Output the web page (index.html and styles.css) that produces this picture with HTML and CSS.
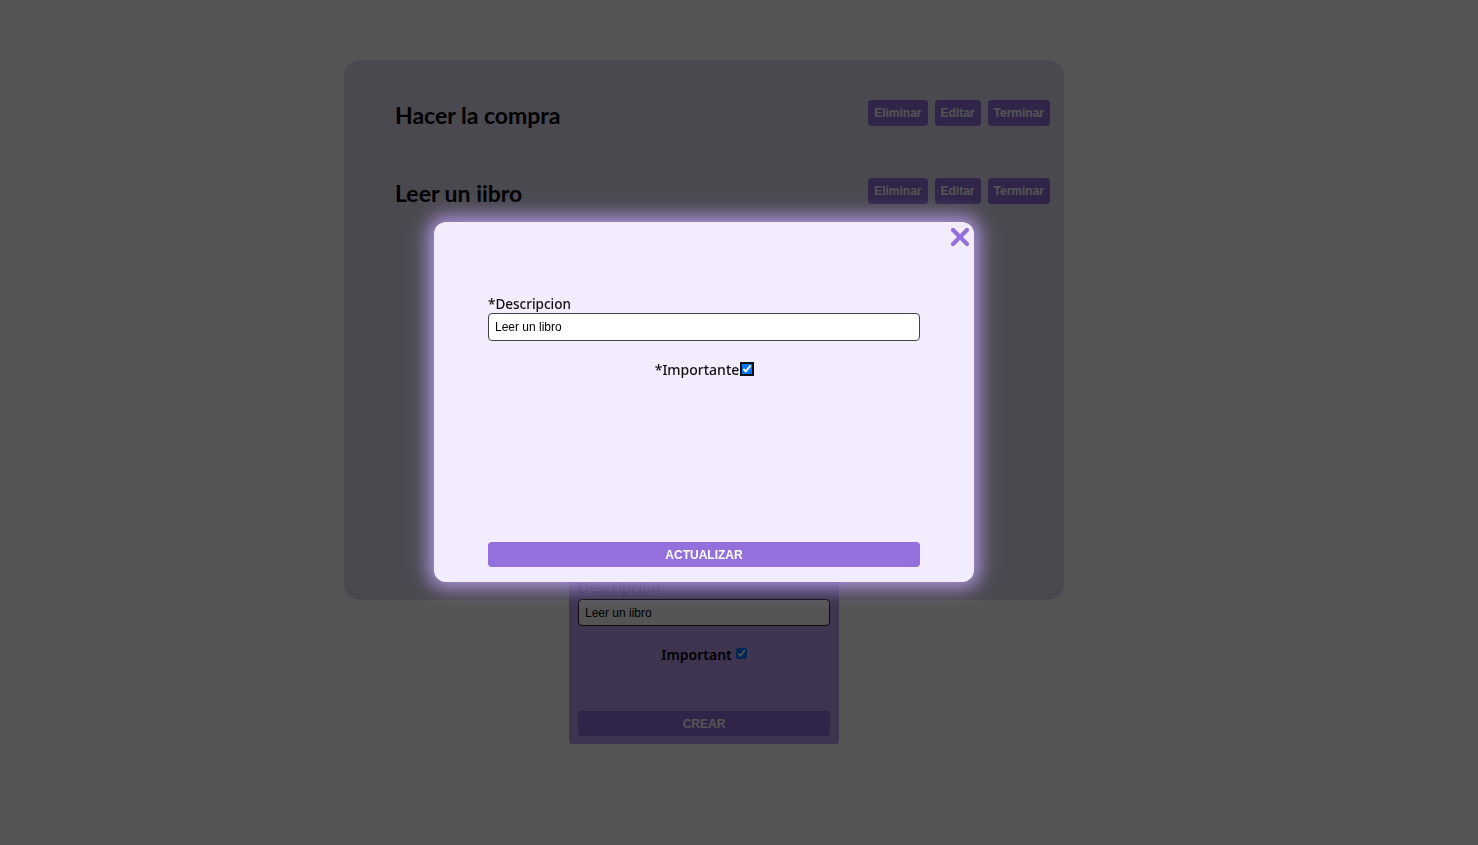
FILE: index.html
```html
<!DOCTYPE html>
<html lang="es">
<head>
<meta charset="utf-8">
<title>Tareas</title>
<link rel="stylesheet" href="styles.css">
</head>
<body>
<div class="page">
  <section class="card">
    <div class="todo">
      <h2 class="todo-title">Hacer la compra</h2>
      <div class="actions">
        <button class="btn">Eliminar</button>
        <button class="btn">Editar</button>
        <button class="btn">Terminar</button>
      </div>
    </div>
    <div class="todo">
      <h2 class="todo-title">Leer un iibro</h2>
      <div class="actions">
        <button class="btn">Eliminar</button>
        <button class="btn">Editar</button>
        <button class="btn">Terminar</button>
      </div>
    </div>
  </section>
  <form class="new-form">
    <label class="form-label">Descripcion</label>
    <input class="form-input" type="text" value="Leer un iibro">
    <div class="check-row"><span class="check-label">Important</span><input type="checkbox" class="form-check" checked></div>
    <button type="button" class="form-btn">CREAR</button>
  </form>
</div>

<div class="backdrop">
  <div class="modal">
    <button class="close" aria-label="Cerrar">
      <svg width="22" height="22" viewBox="0 0 22 22"><path d="M4 4 L18 18 M18 4 L4 18" stroke="#9370db" stroke-width="4.2" stroke-linecap="round" fill="none"/></svg>
    </button>
    <label class="modal-label">*Descripcion</label>
    <input class="modal-input" type="text" value="Leer un libro">
    <div class="modal-check"><span>*Importante</span><input type="checkbox" class="modal-checkbox" checked></div>
    <button type="button" class="modal-btn">ACTUALIZAR</button>
  </div>
</div>
</body>
</html>
```
FILE: styles.css
```css
* { box-sizing: border-box; }
html, body { margin: 0; padding: 0; }
body {
  background: #ffffff;
  font-family: "Noto Sans", "Open Sans", sans-serif;
  height: 845px;
  overflow: hidden;
}
.page {
  width: 1408px;
  padding-top: 60px;
  display: flex;
  flex-direction: column;
  align-items: center;
}
.card {
  width: 720px;
  height: 540px;
  background: #e1dcf2;
  border-radius: 16px;
  padding: 40px 14px 0 51px;
  display: flex;
  flex-direction: column;
  gap: 52px;
}
.todo {
  height: 26px;
  display: flex;
  align-items: center;
  justify-content: space-between;
}
.todo-title {
  margin: 0;
  font-family: Lato, "Noto Sans", sans-serif;
  font-weight: 700;
  font-size: 23px;
  color: #000;
  padding-top: 3px;
}
.actions { display: flex; gap: 7px; }
.btn {
  height: 26px;
  padding: 0 6px;
  border: none;
  border-radius: 4px;
  background: #9370db;
  color: #fff;
  font-family: "Liberation Sans", Arial, sans-serif;
  font-weight: 700;
  font-size: 12px;
}
.new-form {
  width: 270px;
  margin-top: -35px;
  background: #bb9df0;
  border-radius: 3px;
  padding: 8px 9px;
  display: flex;
  flex-direction: column;
}
.form-label {
  font-size: 15px;
  line-height: 22px;
  color: #8a66d6;
  margin: 3px 0 1px;
}
.form-input {
  height: 27px;
  width: 100%;
  border: 1px solid #222;
  border-radius: 4px;
  padding: 0 6px;
  font-family: "Liberation Sans", Arial, sans-serif;
  font-size: 12px;
  color: #000;
  background: #fff;
}
.check-row {
  margin-top: 18px;
  height: 22px;
  display: flex;
  justify-content: center;
  align-items: flex-start;
  gap: 2px;
}
.check-label { font-size: 14px; font-weight: 600; line-height: 22px; color: #000; }
.form-check { width: 11px; height: 11px; margin: 4px 0 0 2px; }
.form-btn {
  margin-top: 45px;
  height: 25px;
  border: none;
  border-radius: 4px;
  background: #9370db;
  color: #fff;
  font-family: "Liberation Sans", Arial, sans-serif;
  font-weight: 700;
  font-size: 12px;
}
.backdrop {
  position: fixed;
  inset: 0;
  background: rgba(0, 0, 0, 0.67);
  display: flex;
  justify-content: center;
  align-items: flex-start;
  padding: 222px 70px 0 0;
}
.modal {
  position: relative;
  width: 540px;
  height: 360px;
  background: #f3ebfe;
  border-radius: 12px;
  box-shadow: 0 0 18px 6px rgba(190, 160, 245, 0.85);
  padding: 74px 54px 15px;
  display: flex;
  flex-direction: column;
}
.close {
  position: absolute;
  top: 4px;
  right: 3px;
  border: none;
  background: none;
  padding: 0;
  width: 22px;
  height: 22px;
  cursor: pointer;
}
.close svg { display: block; }
.modal-label {
  font-size: 13.5px;
  font-weight: 500;
  line-height: 17px;
  color: #111;
}
.modal-input {
  height: 28px;
  width: 100%;
  border: 1px solid #444;
  border-radius: 4px;
  padding: 0 6px;
  font-family: "Liberation Sans", Arial, sans-serif;
  font-size: 12px;
  color: #000;
  background: #fff;
}
.modal-check {
  margin-top: 19px;
  display: flex;
  justify-content: center;
  align-items: center;
  font-size: 14px;
  font-weight: 500;
  line-height: 20px;
  color: #111;
}
.modal-checkbox {
  width: 12px;
  height: 12px;
  margin: 0 0 2px 2px;
  outline: 2px solid #111;
  outline-offset: -1px;
  border-radius: 3px;
}
.modal-btn {
  margin-top: auto;
  height: 25px;
  border: none;
  border-radius: 4px;
  background: #9370db;
  color: #fff;
  font-family: "Liberation Sans", Arial, sans-serif;
  font-weight: 700;
  font-size: 12px;
}
```
